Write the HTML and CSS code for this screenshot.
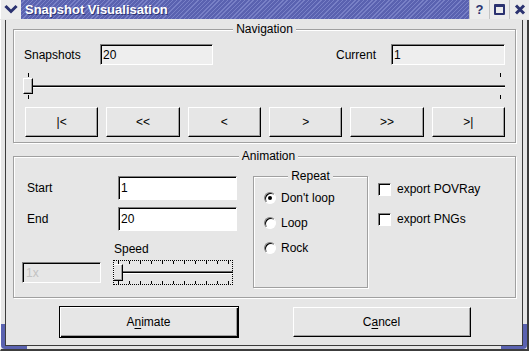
FILE: index.html
```html
<!DOCTYPE html>
<html>
<head>
<meta charset="utf-8">
<title>Snapshot Visualisation</title>
<link rel="stylesheet" href="styles.css">
</head>
<body>
<div class="window">
  <div class="titlebar">
    <div class="tb-menu">
      <svg width="20" height="19" viewBox="0 0 20 19"><path d="M5.5 7 L10 11.5 L14.5 7" fill="none" stroke="#2b3270" stroke-width="3" stroke-linecap="square"/></svg>
    </div>
    <div class="tb-title">Snapshot Visualisation</div>
    <div class="tb-btn tb-help">?</div>
    <div class="tb-btn"><span class="max-icon"></span></div>
    <div class="tb-btn">
      <svg width="12" height="11" viewBox="0 0 12 11"><path d="M2 1.5 L10 9.5 M10 1.5 L2 9.5" fill="none" stroke="#2b3270" stroke-width="3"/></svg>
    </div>
  </div>
  <div class="frame">
    <div class="client">
      <div class="group nav">
        <div class="group-title">Navigation</div>
        <div class="nav-fields">
          <span class="snap-lbl">Snapshots</span>
          <div class="field ro">20</div>
          <span class="cur-lbl">Current</span>
          <div class="field ro">1</div>
        </div>
        <div class="slider big">
          <div class="ticks"><i></i><i></i></div>
          <div class="track"><div class="handle"></div><div class="groove"></div></div>
          <div class="ticks"><i></i><i></i></div>
        </div>
        <div class="nav-buttons">
          <button class="btn">|&lt;</button>
          <button class="btn">&lt;&lt;</button>
          <button class="btn">&lt;</button>
          <button class="btn">&gt;</button>
          <button class="btn">&gt;&gt;</button>
          <button class="btn">&gt;|</button>
        </div>
      </div>

      <div class="group anim">
        <div class="group-title">Animation</div>
        <div class="anim-body">
          <div class="anim-left">
            <div class="arow"><span class="alabel">Start</span><div class="field edit">1</div></div>
            <div class="arow end"><span class="alabel">End</span><div class="field edit">20</div></div>
            <div class="speed-lbl">Speed</div>
            <div class="speed-row">
              <div class="field disabled">1x</div>
              <div class="slider small">
                <div class="ticks"><i></i><i></i><i></i><i></i><i></i><i></i><i></i><i></i><i></i><i></i><i></i></div>
                <div class="track"><div class="handle"></div><div class="groove"></div></div>
                <div class="ticks"><i></i><i></i><i></i><i></i><i></i><i></i><i></i><i></i><i></i><i></i><i></i></div>
              </div>
            </div>
          </div>
          <div class="group repeat">
            <div class="group-title">Repeat</div>
            <div class="radios">
              <label class="radio"><span class="rb checked"></span>Don't loop</label>
              <label class="radio"><span class="rb"></span>Loop</label>
              <label class="radio"><span class="rb"></span>Rock</label>
            </div>
          </div>
          <div class="checks">
            <label class="check"><span class="cb"></span>export POVRay</label>
            <label class="check"><span class="cb"></span>export PNGs</label>
          </div>
        </div>
      </div>

      <div class="actions">
        <button class="btn btn-default">A<u>n</u>imate</button>
        <button class="btn btn-cancel">C<u>a</u>ncel</button>
      </div>
    </div>
  </div>
</div>
</body>
</html>
```

FILE: styles.css
```css
* { box-sizing: border-box; }
html, body { margin: 0; padding: 0; }
body {
  width: 529px;
  height: 351px;
  overflow: hidden;
  font-family: "Liberation Sans", Arial, sans-serif;
  font-size: 12px;
  color: #000;
  background: #e6e6e6;
}

.window {
  width: 529px;
  height: 351px;
  display: flex;
  flex-direction: column;
  background: #e6e6e6;
}

/* ---------- title bar ---------- */
.titlebar {
  height: 20px;
  flex: none;
  display: flex;
  border-bottom: 1px solid #e6e6e6;
}
.tb-menu {
  width: 21px;
  height: 19px;
  background: #ececec;
  border-left: 1px solid #fff;
  display: flex;
  align-items: center;
  justify-content: center;
}
.tb-title {
  flex: 1;
  height: 19px;
  padding-left: 4px;
  background: repeating-linear-gradient(135deg, #5a62b0 0 2px, #7880c6 2px 3px);
  color: #fff;
  font-weight: bold;
  font-size: 13px;
  line-height: 19px;
  text-shadow: 1px 1px 0 #2e3574;
  white-space: nowrap;
}
.tb-btn {
  width: 20px;
  height: 19px;
  background: #ececec;
  border-left: 1px solid #c4c4c4;
  display: flex;
  align-items: center;
  justify-content: center;
  color: #2b3270;
}
.tb-help {
  font-weight: bold;
  font-size: 13px;
}
.max-icon {
  width: 11px;
  height: 11px;
  border: 2px solid #2b3270;
  border-top-width: 3px;
  border-radius: 1px;
}

/* ---------- frame ---------- */
.frame {
  position: relative;
  flex: 1;
  display: flex;
  padding: 0 4px 3px 4px;
  border-left: 1px solid #fff;
  border-right: 2px solid #3c3c3c;
  border-bottom: 2px solid #3c3c3c;
}
.frame::before,
.frame::after {
  content: "";
  position: absolute;
  bottom: 0;
  width: 22px;
  height: 22px;
  border-bottom: 3px solid #5a62b0;
}
.frame::before {
  left: 0;
  border-left: 4px solid #5a62b0;
  border-bottom-left-radius: 4px;
}
.frame::after {
  right: 0;
  border-right: 4px solid #5a62b0;
  border-bottom-right-radius: 4px;
}
.client {
  flex: 1;
  display: flex;
  flex-direction: column;
  padding: 9px 6px 0 7px;
  border-left: 1px solid #3c3c3c;
  border-right: 1px solid #3c3c3c;
  border-bottom: 1px solid #3c3c3c;
  background: #e6e6e6;
}

/* ---------- group boxes ---------- */
.group {
  border: 1px solid #a0a0a0;
  box-shadow: 1px 1px 0 #fff, inset 1px 1px 0 #fff;
}
.group-title {
  display: table;
  margin: -8px auto 0;
  padding: 0 3px;
  line-height: 14px;
  background: #e6e6e6;
}

/* ---------- navigation ---------- */
.nav {
  padding: 0 10px 5px 10px;
}
.nav-fields {
  margin-top: 8px;
  height: 21px;
  display: flex;
  align-items: center;
}
.snap-lbl { width: 76px; }
.cur-lbl { margin-left: auto; margin-right: 15px; }

.field {
  height: 21px;
  width: 114px;
  border: 1px solid;
  border-color: #808080 #fff #fff #808080;
  box-shadow: inset 1px 1px 0 #000;
  padding: 0 2px;
  display: flex;
  align-items: center;
  white-space: nowrap;
}
.field.ro { background: #eeeeee; }
.field.ro:first-of-type { width: 113px; }

.slider { display: flex; flex-direction: column; }
.slider .ticks {
  display: flex;
  justify-content: space-between;
}
.slider .ticks i {
  display: block;
  width: 1px;
  background: #000;
}
.slider .track {
  display: flex;
  align-items: center;
}
.handle {
  width: 10px;
  flex: none;
  background: #e6e6e6;
  border: 1px solid;
  border-color: #fff #000 #000 #fff;
  box-shadow: inset -1px -1px 0 #a0a0a0;
}
.groove {
  flex: 1;
  height: 3px;
  border-top: 1px solid #6a6a6a;
  border-bottom: 1px solid #fff;
  background: #000;
}

.slider.big {
  margin-top: 8px;
  margin-left: -1px;
  width: 482px;
}
.slider.big .ticks { height: 5px; padding: 0 4px 0 5px; }
.slider.big .ticks i { height: 4px; margin-top: 0; }
.slider.big .ticks:last-child i { margin-top: 1px; }
.slider.big .track { height: 16px; }
.slider.big .handle { height: 16px; }

.nav-buttons {
  margin-top: 8px;
  margin-left: 1px;
  margin-right: 0;
  display: grid;
  grid-template-columns: repeat(6, 1fr);
  column-gap: 8px;
}
.btn {
  font: inherit;
  color: #000;
  margin: 0;
  padding: 0;
  background: #e6e6e6;
  border: 1px solid;
  border-color: #fff #000 #000 #fff;
  box-shadow: inset -1px -1px 0 #a0a0a0;
}
.nav-buttons .btn { height: 30px; }

/* ---------- animation ---------- */
.anim {
  margin-top: 13px;
  padding: 0 0 9px 8px;
}
.anim-body {
  margin-top: 13px;
  display: flex;
  align-items: flex-start;
}
.anim-left {
  width: 215px;
  display: flex;
  flex-direction: column;
}
.arow {
  height: 24px;
  display: flex;
  align-items: center;
}
.arow.end { margin-top: 7px; }
.alabel {
  width: 96px;
  padding-left: 5px;
}
.field.edit {
  width: 119px;
  height: 24px;
  background: #fff;
}
.speed-lbl {
  margin-top: 11px;
  padding-left: 92px;
  line-height: 14px;
}
.speed-row {
  margin-top: 4px;
  height: 25px;
  display: flex;
  align-items: center;
}
.field.disabled {
  width: 79px;
  height: 21px;
  margin-right: 12px;
  background: #e6e6e6;
  color: #c2c2c2;
  padding-left: 3px;
}
.slider.small {
  width: 120px;
  height: 25px;
  outline: 1px dotted #000;
  outline-offset: -1px;
}
.slider.small .ticks { height: 4px; padding: 0 4px 0 5px; }
.slider.small .ticks i { height: 3px; margin-top: 1px; }
.slider.small .ticks:last-child i { margin-top: 0; }
.slider.small .track { height: 17px; }
.slider.small .handle { height: 17px; }

.repeat {
  width: 115px;
  height: 112px;
  margin-left: 16px;
}
.radios {
  margin-top: 2px;
  padding-left: 10px;
  display: flex;
  flex-direction: column;
}
.radio {
  height: 25px;
  display: flex;
  align-items: center;
}
.rb {
  width: 12px;
  height: 12px;
  margin-right: 5px;
  border-radius: 50%;
  border: 1px solid;
  border-color: #808080 #fff #fff #808080;
  box-shadow: inset 1px 1px 0 #000;
  background: #fff;
  display: flex;
  align-items: center;
  justify-content: center;
}
.rb.checked::after {
  content: "";
  width: 4px;
  height: 4px;
  border-radius: 50%;
  background: #000;
}

.checks {
  margin-top: 1px;
  margin-left: 10px;
  display: flex;
  flex-direction: column;
  gap: 6px;
}
.check {
  height: 24px;
  display: flex;
  align-items: center;
}
.cb {
  width: 13px;
  height: 13px;
  margin-right: 6px;
  border: 1px solid;
  border-color: #808080 #fff #fff #808080;
  box-shadow: inset 1px 1px 0 #000;
  background: #fff;
}

/* ---------- actions ---------- */
.actions {
  margin-top: 8px;
  display: flex;
  align-items: center;
  justify-content: center;
  gap: 54px;
}
.btn-default {
  width: 180px;
  height: 32px;
  border: 1px solid #000;
  box-shadow: inset 1px 1px 0 #fff, inset -1px -1px 0 #000, inset -2px -2px 0 #a0a0a0;
}
.btn-cancel {
  width: 178px;
  height: 30px;
}
u { text-decoration-thickness: 1px; text-underline-offset: 2px; }
```
